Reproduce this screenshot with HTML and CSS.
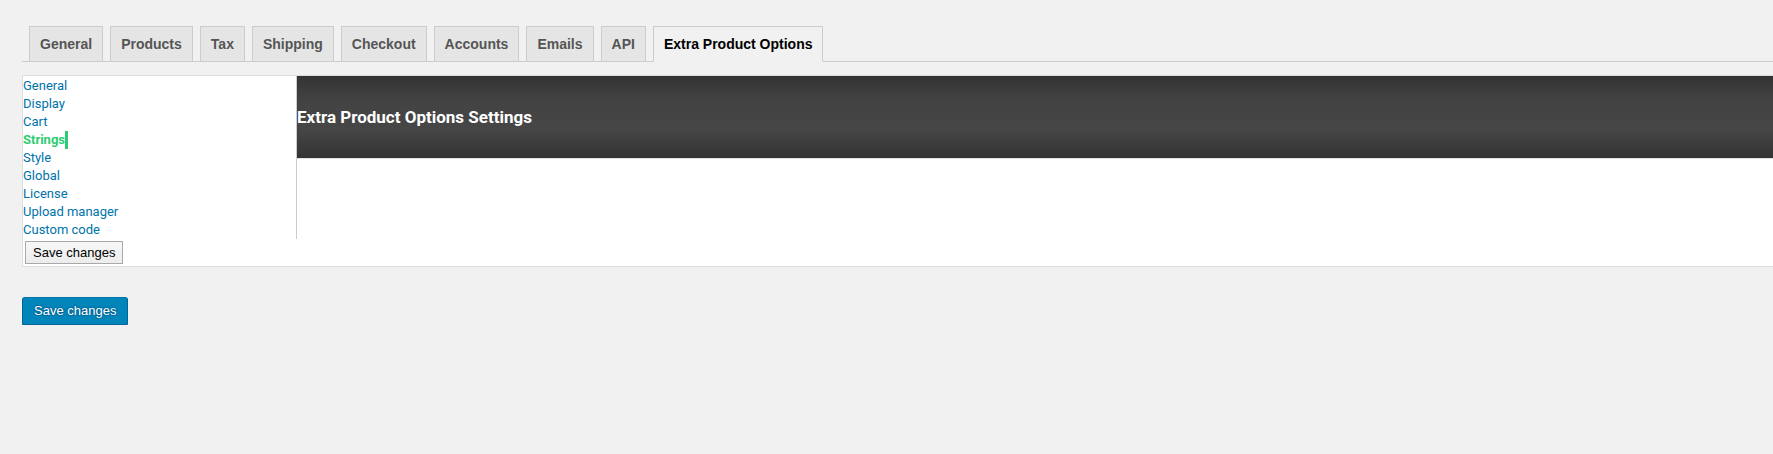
FILE: index.html
```html
<!DOCTYPE html>
<html lang="en">
<head>
<meta charset="utf-8">
<title>Extra Product Options Settings</title>
<link rel="stylesheet" href="styles.css">
</head>
<body>
<div class="wrap">
  <nav class="nav-tab-wrapper">
    <a class="nav-tab" href="#">General</a>
    <a class="nav-tab" href="#">Products</a>
    <a class="nav-tab" href="#">Tax</a>
    <a class="nav-tab" href="#">Shipping</a>
    <a class="nav-tab" href="#">Checkout</a>
    <a class="nav-tab" href="#">Accounts</a>
    <a class="nav-tab" href="#">Emails</a>
    <a class="nav-tab" href="#">API</a>
    <a class="nav-tab nav-tab-active" href="#">Extra Product Options</a>
  </nav>
  <div class="settings-box">
    <div class="side">
      <ul class="side-menu">
        <li><a href="#">General</a></li>
        <li><a href="#">Display</a></li>
        <li><a href="#">Cart</a></li>
        <li><a href="#" class="current">Strings</a></li>
        <li><a href="#">Style</a></li>
        <li><a href="#">Global</a></li>
        <li><a href="#">License</a></li>
        <li><a href="#">Upload manager</a></li>
        <li><a href="#">Custom code</a></li>
      </ul>
      <button class="btn-default" type="button">Save changes</button>
    </div>
    <div class="panel">
      <div class="panel-header"><h2>Extra Product Options Settings</h2></div>
    </div>
  </div>
  <p class="submit"><button class="btn-primary" type="button">Save changes</button></p>
</div>
</body>
</html>
```
FILE: styles.css
```css
html, body {
  margin: 0;
  padding: 0;
}
body {
  background: #f1f1f1;
  font-family: "Liberation Sans", Arial, sans-serif;
  overflow: hidden;
}
.wrap {
  padding: 26px 0 0 22px;
}
.nav-tab-wrapper {
  display: flex;
  align-items: flex-start;
  border-bottom: 1px solid #ccc;
}
.nav-tab {
  display: block;
  margin-left: 7px;
  padding: 5px 10px;
  border: 1px solid #ccc;
  border-bottom: none;
  background: #e5e5e5;
  color: #555;
  font-size: 14px;
  line-height: 24px;
  font-weight: 700;
  text-decoration: none;
  white-space: nowrap;
}
.nav-tab-active {
  background: #f1f1f1;
  color: #000;
  border-bottom: 1px solid #f1f1f1;
  margin-bottom: -1px;
}
.settings-box {
  margin-top: 13px;
  display: flex;
  background: #fff;
  border: 1px solid #ddd;
  border-right: none;
}
.side {
  width: 274px;
  flex: none;
  display: flex;
  flex-direction: column;
  align-items: flex-start;
}
.side-menu {
  list-style: none;
  margin: 0;
  padding: 1px 0 0;
  width: 273px;
  border-right: 1px solid #ccc;
}
.side-menu li {
  font-family: Roboto, "Liberation Sans", sans-serif;
  font-size: 13px;
  line-height: 18px;
}
.side-menu a {
  color: #0073aa;
  text-decoration: none;
}
.side-menu a.current {
  color: #2ecc71;
  font-weight: 700;
  border-right: 3px solid #2ecc71;
  display: inline-block;
}
.btn-default {
  margin: 2px 0 2px 2px;
  height: 23px;
  padding: 0 7px;
  border: 1px solid #a9a9a9;
  border-radius: 0;
  background: linear-gradient(#f8f8f8, #ececec);
  color: #000;
  font-family: "Liberation Sans", Arial, sans-serif;
  font-size: 13px;
  line-height: 21px;
}
.panel {
  flex: 1;
  min-width: 0;
}
.panel-header {
  height: 82px;
  display: flex;
  align-items: center;
  border-bottom: 1px solid #e2e2e2;
  background: linear-gradient(to bottom, #333 0%, #434343 30%, #464646 65%, #333 100%);
}
.panel-header h2 {
  margin: 0;
  color: #fff;
  font-family: Roboto, "Liberation Sans", sans-serif;
  font-weight: 700;
  font-size: 17px;
  line-height: 20px;
}
.submit {
  margin: 30px 0 0;
  padding: 0;
}
.btn-primary {
  height: 28px;
  padding: 0 11px;
  background: #0085ba;
  border: 1px solid #0073aa;
  border-color: #0073aa #006799 #006799;
  border-radius: 3px;
  box-shadow: 0 1px 0 #006799;
  color: #fff;
  font-family: "Liberation Sans", Arial, sans-serif;
  font-size: 13px;
  line-height: 26px;
  text-shadow: 0 -1px 1px #006799, 1px 0 1px #006799, 0 1px 1px #006799, -1px 0 1px #006799;
}
```
